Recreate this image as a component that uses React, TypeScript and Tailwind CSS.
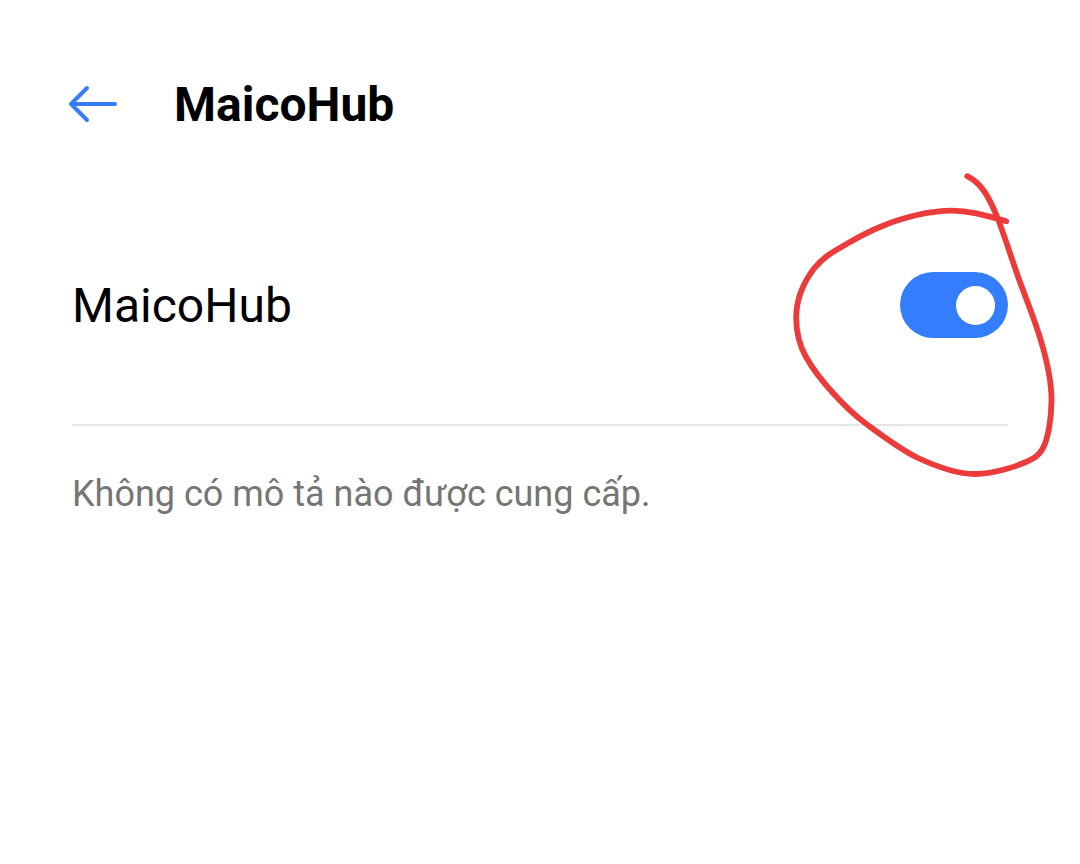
import { useState } from "react";

function BackArrow() {
  return (
    <svg
      viewBox="0 0 50 40"
      className="h-10 w-[50px]"
      fill="none"
      stroke="#377dfa"
      strokeWidth="4"
      strokeLinecap="round"
      strokeLinejoin="round"
      aria-hidden="true"
    >
      <path d="M19 4L3 20l16 16M3.500 20H47" />
    </svg>
  );
}

function HandDrawnCircle() {
  return (
    <svg
      viewBox="780 160 290 330"
      className="pointer-events-none absolute -top-[26px] -right-[62px] h-[330px] w-[290px]"
      fill="none"
      stroke="#eb3b3b"
      strokeWidth="5.800"
      strokeLinecap="round"
      strokeLinejoin="round"
      aria-hidden="true"
    >
      <path d="M967.200 176.200C974 179.500 979.500 184.500 984 191C989.500 199 994 209 998 219C1006 240 1013 263 1020 282C1028 304 1034.500 319 1041 341C1047 361 1051.500 381 1051.500 400C1051.500 419 1048 437 1044 446C1041.500 451.500 1038.500 455.500 1033 458.500C1022 465 994 474 975 474C957 474 934 465.500 917 457.500C899 448.500 882 435.500 865 423C853.500 414.500 843 404 833 393C822.500 381.500 813 369.500 806 357C799.500 345.500 796.200 333 796.200 318C796.200 299 803 283 814 268.500C824 256 836 250 850 242C860 236.300 869.500 231.300 880 227C902 217.500 930 210.700 952 210.700C972 210.700 989 216.500 1006.200 221.200" />
    </svg>
  );
}

export default function App() {
  const [enabled, setEnabled] = useState(true);

  return (
    <div className="min-h-screen bg-white pt-[75px] font-['Roboto',sans-serif] text-black">
      <header className="flex items-center gap-14 pr-[72px] pl-[68px]">
        <button type="button" aria-label="Back" className="shrink-0">
          <BackArrow />
        </button>
        <h1 className="pt-[2px] text-[48px] leading-[56px] font-bold">
          MaicoHub
        </h1>
      </header>

      <main className="mt-[53px] px-[72px]">
        <div className="relative flex min-h-60 items-center justify-between border-b-2 border-[#e5e5e5]">
          <label
            htmlFor="hub-switch"
            className="pt-[2px] text-[48px] leading-[56px]"
          >
            MaicoHub
          </label>
          <input
            id="hub-switch"
            type="checkbox"
            role="switch"
            checked={enabled}
            onChange={(event) => setEnabled(event.target.checked)}
            className="flex h-[66px] w-[108px] shrink-0 cursor-pointer appearance-none items-center rounded-full bg-neutral-300 px-[13px] before:size-[39px] before:rounded-full before:bg-white before:content-[''] checked:justify-end checked:bg-[#347dff]"
          />
          <HandDrawnCircle />
        </div>
        <p className="mt-[46px] text-[36px] leading-[44px] text-[#757575]">
          Không có mô tả nào được cung cấp.
        </p>
      </main>
    </div>
  );
}
